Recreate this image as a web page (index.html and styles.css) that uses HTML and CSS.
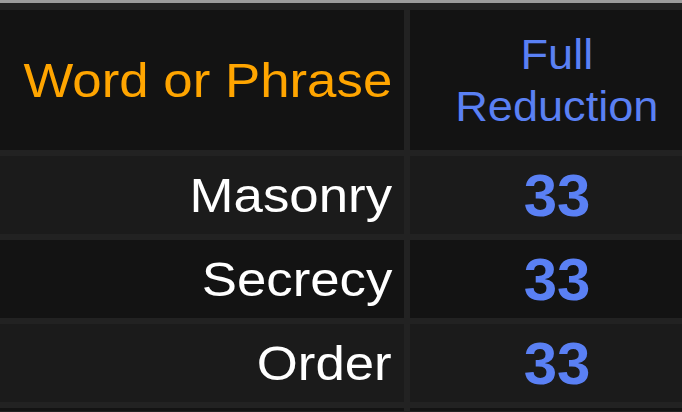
FILE: index.html
```html
<!DOCTYPE html>
<html>
<head>
<meta charset="utf-8">
<link rel="stylesheet" href="styles.css">
</head>
<body>
<div class="topline"></div>
<div class="table">
  <div class="cell head word"><span class="wide">Word or Phrase</span></div>
  <div class="cell head red"><span class="wide-c">Full<br>Reduction</span></div>
  <div class="cell odd word-cell"><span class="wide">Masonry</span></div>
  <div class="cell odd num">33</div>
  <div class="cell even word-cell"><span class="wide">Secrecy</span></div>
  <div class="cell even num">33</div>
  <div class="cell odd word-cell"><span class="wide">Order</span></div>
  <div class="cell odd num">33</div>
  <div class="cell even"></div>
  <div class="cell even"></div>
</div>
</body>
</html>
```
FILE: styles.css
```css
html, body {
  margin: 0;
  padding: 0;
  background: #222222;
  overflow: hidden;
  width: 682px;
  height: 412px;
}
.topline {
  height: 3px;
  background: #9c9c9c;
}
.table {
  width: 704px;
  display: grid;
  grid-template-columns: 404px 1fr;
  grid-template-rows: 140px 78px 78px 78px 3px;
  column-gap: 6px;
  row-gap: 6px;
  padding-top: 7px;
  font-family: "Liberation Sans", Arial, sans-serif;
}
.cell {
  display: flex;
  align-items: center;
}
.head { background: #131313; }
.odd { background: #1b1b1b; }
.even { background: #131313; }
.wide {
  display: inline-block;
  transform: scaleX(1.1);
  transform-origin: right center;
}
.wide-c {
  display: inline-block;
  transform: scaleX(1.05);
  transform-origin: center center;
}
.word {
  justify-content: flex-end;
  padding-right: 12px;
  color: #ffa500;
  font-size: 48px;
}
.red {
  justify-content: center;
  text-align: center;
  color: #5a80f4;
  font-size: 43px;
  line-height: 52px;
}
.word-cell {
  justify-content: flex-end;
  padding-right: 12px;
  color: #ffffff;
  font-size: 48px;
}
.num {
  justify-content: center;
  color: #5a80f4;
  font-size: 60px;
  font-weight: bold;
}
```
